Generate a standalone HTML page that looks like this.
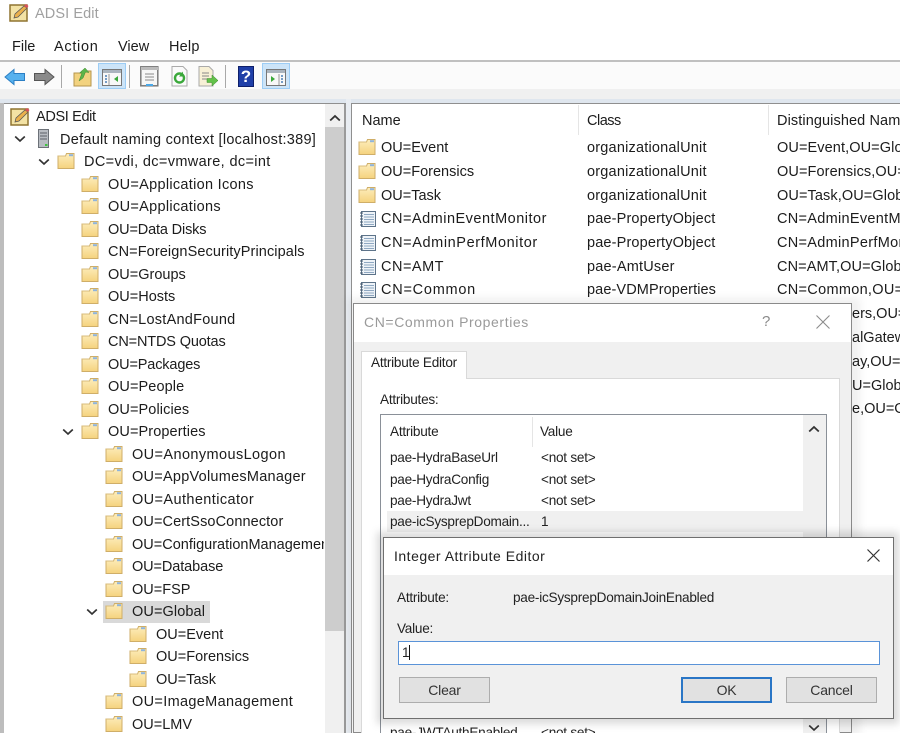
<!DOCTYPE html>
<html><head><meta charset="utf-8"><title>ADSI Edit</title>
<style>
html,body{margin:0;padding:0;background:#fff}
#r{position:relative;width:900px;height:733px;overflow:hidden;background:#fff;font-family:"Liberation Sans",sans-serif;font-size:14.5px;color:#1c1c1c;filter:blur(.35px)}
#r div,#r span,#r svg{position:absolute}
.t{white-space:nowrap;line-height:18px;height:18px}
.d{white-space:nowrap;line-height:16px;height:16px;font-size:13.6px;letter-spacing:-.25px;color:#222}
.b{box-sizing:border-box;background:#e1e1e1;border:1px solid #adadad;text-align:center;font-size:14px;color:#333;line-height:24px;letter-spacing:-.2px}
</style></head><body>
<div id="r">
<svg width="0" height="0" style="position:absolute">
<defs><linearGradient id="g" x1="0" y1="0" x2="0" y2="1"><stop offset="0" stop-color="#fdeebd"/><stop offset="1" stop-color="#f5d27e"/></linearGradient></defs>
<symbol id="f" viewBox="0 0 18 18"><path d="M1 4V16.500H17V1.500H9.500L8.500 4Z" fill="url(#g)" stroke="#cfae68"/><path d="M1 4H8.500" stroke="#d9bd7c"/><path d="M12 2.200h4v2h-4z" fill="#8fb4dc"/></symbol>
<symbol id="n" viewBox="0 0 18 18"><rect x="2.500" y="1.500" width="14" height="15" fill="#eef3f8" stroke="#5d7389"/><path d="M5 4.500H15M5 7H15M5 9.500H15M5 12H15M5 14.500H15" stroke="#8fa8c2"/><path d="M1 3H4M1 6H4M1 9H4M1 12H4M1 15H4" stroke="#40566b"/></symbol>
<symbol id="a" viewBox="0 0 20 20"><path d="M1 2H18V18H1Z" fill="#f3e2a4" stroke="#8f7430" stroke-width="1.500"/><path d="M5 15L6 11L15 3L18 5L9 14Z" fill="#eab04c" stroke="#555" stroke-width=".7"/><path d="M15 3L18 5L19.500 3L17 1Z" fill="#d8505a"/></symbol>
<symbol id="c" viewBox="0 0 12 8"><path d="M1.200 1.500L6 6L10.800 1.500" fill="none" stroke="#333" stroke-width="1.700"/></symbol>
</svg>

<!-- title + menu -->
<svg style="left:9px;top:3px" width="20" height="20"><use href="#a"/></svg>
<div class="t" style="left:35px;top:5px;color:#a0a0a0;letter-spacing:.1px">ADSI Edit</div>
<div class="t" style="left:12px;top:38px">File</div>
<div class="t" style="left:54px;top:38px;letter-spacing:.7px">Action</div>
<div class="t" style="left:118px;top:38px">View</div>
<div class="t" style="left:169px;top:38px;letter-spacing:.2px">Help</div>
<div style="left:0;top:60px;width:900px;height:2px;background:#c0c0c0"></div>

<!-- toolbar -->
<div style="left:0;top:62px;width:900px;height:27px;background:#fbfbfb"></div>
<div style="left:0;top:89px;width:900px;height:10px;background:#f0f0f0"></div>
<div style="left:0;top:99px;width:900px;height:4px;background:#dfe6ee"></div>
<svg style="left:4px;top:67px" width="22" height="20"><path d="M1 10L10 2.500V6.500H20.500V13.500H10V17.500Z" fill="#56b1ee" stroke="#2b7fc4"/></svg>
<svg style="left:33px;top:67px" width="22" height="20"><path d="M21 10L12 2.500V6.500H1.500V13.500H12V17.500Z" fill="#8a8a8a" stroke="#555"/></svg>
<div style="left:61px;top:65px;width:1px;height:23px;background:#a8a8a8"></div>
<svg style="left:73px;top:66px" width="20" height="22"><path d="M1 7H8L9 5H18V20H1Z" fill="#f2d27f" stroke="#b5954e"/><path d="M6 15L9 7L6.500 7L12 2L16 6.500L12.500 6L10 12Z" fill="#5db54a" stroke="#3a8a2e" stroke-width=".5"/></svg>
<div style="left:98px;top:63px;width:28px;height:26px;background:#cce4f8;border:1px solid #9dcdf5;box-sizing:border-box"></div>
<svg style="left:102px;top:69px" width="21" height="18"><rect x=".5" y=".5" width="19" height="16" fill="#f8f8f8" stroke="#777"/><rect x="1" y="1" width="18" height="3" fill="#aab4be"/><path d="M7 5v11" stroke="#999"/><path d="M3 7h2M3 10h2M3 13h2" stroke="#4a7fb5" stroke-width="1.500"/><path d="M16 7v6l-4-3z" fill="#3aa83a"/></svg>
<div style="left:129px;top:65px;width:1px;height:23px;background:#a8a8a8"></div>
<svg style="left:140px;top:66px" width="19" height="21"><rect x=".8" y=".8" width="17" height="19" fill="#f6f6f6" stroke="#7a7a7a" stroke-width="1.500"/><rect x="1" y="1" width="17" height="3" fill="#bbb"/><path d="M5 8h9M5 11h9M5 14h9" stroke="#8a8a8a"/><path d="M6 19h7" stroke="#4aa8e8" stroke-width="2"/></svg>
<svg style="left:171px;top:66px" width="17" height="21"><path d="M1 .5H12L16 4.500V20H1Z" fill="#fafafa" stroke="#aaa"/><circle cx="8.500" cy="12" r="4.500" fill="none" stroke="#3aa83a" stroke-width="2.400"/><path d="M12 5.500v5h-4z" fill="#3aa83a"/></svg>
<svg style="left:198px;top:66px" width="21" height="21"><path d="M1 .5H11L15 4.500V20H1Z" fill="#f7f0d6" stroke="#aaa"/><path d="M4 7h7M4 10h7M4 13h6" stroke="#888"/><path d="M9 12.500h5V9l6 5.500-6 5.500v-3.500H9Z" fill="#63c14a" stroke="#3a8a2e" stroke-width=".5"/></svg>
<div style="left:225px;top:65px;width:1px;height:23px;background:#a8a8a8"></div>
<div style="left:238px;top:66px;width:16px;height:21px;background:#1f3fa8;border:1px solid #0e1f6a;box-sizing:border-box;color:#fff;font-weight:bold;font-size:17px;line-height:20px;text-align:center">?</div>
<div style="left:262px;top:63px;width:28px;height:26px;background:#cce4f8;border:1px solid #9dcdf5;box-sizing:border-box"></div>
<svg style="left:266px;top:69px" width="21" height="18"><rect x=".5" y=".5" width="19" height="16" fill="#f8f8f8" stroke="#777"/><rect x="1" y="1" width="18" height="3" fill="#aab4be"/><path d="M13 5v11" stroke="#999"/><path d="M15 7h2M15 10h2M15 13h2" stroke="#4a7fb5" stroke-width="1.500"/><path d="M5 7v6l4-3z" fill="#3aa83a"/></svg>

<!-- frame -->
<div style="left:0;top:103px;width:4px;height:630px;background:#bdbdbd"></div>
<div style="left:4px;top:103px;width:342px;height:1px;background:#8f8f8f"></div>
<div style="left:4px;top:104px;width:321px;height:629px;background:#fff"></div>
<div style="left:325px;top:104px;width:19px;height:629px;background:#f0f0f0"></div>
<div style="left:325px;top:127px;width:19px;height:504px;background:#cdcdcd"></div>
<svg style="left:329px;top:114px" width="12" height="8"><path d="M1.200 6.500L6 2L10.800 6.500" fill="none" stroke="#333" stroke-width="1.800"/></svg>
<div style="left:344px;top:104px;width:2px;height:629px;background:#9a9a9a"></div>
<div style="left:346px;top:99px;width:5px;height:634px;background:#e9edf2"></div>
<div style="left:351px;top:103px;width:549px;height:1px;background:#8f8f8f"></div>
<div style="left:351px;top:103px;width:1px;height:630px;background:#8f8f8f"></div>

<!-- tree -->
<svg style="left:10px;top:107px" width="20" height="20"><use href="#a"/></svg>
<div class="t" style="left:36px;top:108px;letter-spacing:-.35px">ADSI Edit</div>
<svg style="left:14px;top:135px" width="12" height="8"><use href="#c"/></svg>
<svg style="left:38px;top:129px" width="12" height="19"><rect x=".5" y=".5" width="10" height="18" fill="#b8bcc2" stroke="#6c7178"/><path d="M2 4h7M2 7h7M2 10h7" stroke="#5b6068"/><rect x="7" y="15" width="2.500" height="2" fill="#3fc43f"/></svg>
<div class="t" style="left:60px;top:131px;letter-spacing:.27px">Default naming context [localhost:389]</div>
<svg style="left:38px;top:158px" width="12" height="8"><use href="#c"/></svg>
<svg style="left:57px;top:152px" width="18" height="18"><use href="#f"/></svg>
<div class="t" style="left:84px;top:153px;letter-spacing:.36px">DC=vdi, dc=vmware, dc=int</div>

<svg style="left:81px;top:175px" width="18" height="18"><use href="#f"/></svg><div class="t" style="left:108px;top:176px;letter-spacing:.3px">OU=Application Icons</div>
<svg style="left:81px;top:197px" width="18" height="18"><use href="#f"/></svg><div class="t" style="left:108px;top:198px;letter-spacing:.3px">OU=Applications</div>
<svg style="left:81px;top:220px" width="18" height="18"><use href="#f"/></svg><div class="t" style="left:108px;top:221px;letter-spacing:-.15px">OU=Data Disks</div>
<svg style="left:81px;top:242px" width="18" height="18"><use href="#f"/></svg><div class="t" style="left:108px;top:243px;letter-spacing:.1px">CN=ForeignSecurityPrincipals</div>
<svg style="left:81px;top:265px" width="18" height="18"><use href="#f"/></svg><div class="t" style="left:108px;top:266px">OU=Groups</div>
<svg style="left:81px;top:287px" width="18" height="18"><use href="#f"/></svg><div class="t" style="left:108px;top:288px">OU=Hosts</div>
<svg style="left:81px;top:310px" width="18" height="18"><use href="#f"/></svg><div class="t" style="left:108px;top:311px;letter-spacing:.25px">CN=LostAndFound</div>
<svg style="left:81px;top:332px" width="18" height="18"><use href="#f"/></svg><div class="t" style="left:108px;top:333px;letter-spacing:-.15px">CN=NTDS Quotas</div>
<svg style="left:81px;top:355px" width="18" height="18"><use href="#f"/></svg><div class="t" style="left:108px;top:356px;letter-spacing:-.15px">OU=Packages</div>
<svg style="left:81px;top:377px" width="18" height="18"><use href="#f"/></svg><div class="t" style="left:108px;top:378px;letter-spacing:.1px">OU=People</div>
<svg style="left:81px;top:400px" width="18" height="18"><use href="#f"/></svg><div class="t" style="left:108px;top:401px;letter-spacing:.1px">OU=Policies</div>
<svg style="left:62px;top:428px" width="12" height="8"><use href="#c"/></svg>
<svg style="left:81px;top:422px" width="18" height="18"><use href="#f"/></svg><div class="t" style="left:108px;top:423px;letter-spacing:.1px">OU=Properties</div>

<svg style="left:105px;top:445px" width="18" height="18"><use href="#f"/></svg><div class="t" style="left:132px;top:446px;letter-spacing:.4px">OU=AnonymousLogon</div>
<svg style="left:105px;top:467px" width="18" height="18"><use href="#f"/></svg><div class="t" style="left:132px;top:468px;letter-spacing:.25px">OU=AppVolumesManager</div>
<svg style="left:105px;top:490px" width="18" height="18"><use href="#f"/></svg><div class="t" style="left:132px;top:491px;letter-spacing:.4px">OU=Authenticator</div>
<svg style="left:105px;top:512px" width="18" height="18"><use href="#f"/></svg><div class="t" style="left:132px;top:513px;letter-spacing:.1px">OU=CertSsoConnector</div>
<svg style="left:105px;top:535px" width="18" height="18"><use href="#f"/></svg><div style="left:132px;top:536px;width:192px;height:18px;overflow:hidden"><div class="t" style="left:0;top:0">OU=ConfigurationManagement</div></div>
<svg style="left:105px;top:557px" width="18" height="18"><use href="#f"/></svg><div class="t" style="left:132px;top:558px;letter-spacing:-.1px">OU=Database</div>
<svg style="left:105px;top:580px" width="18" height="18"><use href="#f"/></svg><div class="t" style="left:132px;top:581px">OU=FSP</div>
<div style="left:103px;top:601px;width:107px;height:22px;background:#d9d9d9"></div>
<svg style="left:86px;top:608px" width="12" height="8"><use href="#c"/></svg>
<svg style="left:105px;top:602px" width="18" height="18"><use href="#f"/></svg><div class="t" style="left:132px;top:603px;letter-spacing:.1px">OU=Global</div>
<svg style="left:129px;top:625px" width="18" height="18"><use href="#f"/></svg><div class="t" style="left:156px;top:626px">OU=Event</div>
<svg style="left:129px;top:647px" width="18" height="18"><use href="#f"/></svg><div class="t" style="left:156px;top:648px">OU=Forensics</div>
<svg style="left:129px;top:670px" width="18" height="18"><use href="#f"/></svg><div class="t" style="left:156px;top:671px">OU=Task</div>
<svg style="left:105px;top:692px" width="18" height="18"><use href="#f"/></svg><div class="t" style="left:132px;top:693px;letter-spacing:.33px">OU=ImageManagement</div>
<svg style="left:105px;top:715px" width="18" height="18"><use href="#f"/></svg><div class="t" style="left:132px;top:716px">OU=LMV</div>

<!-- list -->
<div class="t" style="left:362px;top:112px">Name</div>
<div class="t" style="left:587px;top:112px;letter-spacing:-.5px">Class</div>
<div class="t" style="left:777px;top:112px;letter-spacing:.1px">Distinguished Name</div>
<div style="left:578px;top:105px;width:1px;height:30px;background:#e5e5e5"></div>
<div style="left:768px;top:105px;width:1px;height:30px;background:#e5e5e5"></div>

<svg style="left:358px;top:138px" width="18" height="18"><use href="#f"/></svg><div class="t" style="left:381px;top:139px">OU=Event</div><div class="t" style="left:587px;top:139px;letter-spacing:.2px">organizationalUnit</div><div class="t" style="left:777px;top:139px;letter-spacing:.1px">OU=Event,OU=Global,OU=Properties</div>
<svg style="left:358px;top:162px" width="18" height="18"><use href="#f"/></svg><div class="t" style="left:381px;top:163px">OU=Forensics</div><div class="t" style="left:587px;top:163px;letter-spacing:.2px">organizationalUnit</div><div class="t" style="left:777px;top:163px;letter-spacing:.1px">OU=Forensics,OU=Global</div>
<svg style="left:358px;top:186px" width="18" height="18"><use href="#f"/></svg><div class="t" style="left:381px;top:187px">OU=Task</div><div class="t" style="left:587px;top:187px;letter-spacing:.2px">organizationalUnit</div><div class="t" style="left:777px;top:187px;letter-spacing:.1px">OU=Task,OU=Global,OU=Prop</div>
<svg style="left:359px;top:210px" width="18" height="18"><use href="#n"/></svg><div class="t" style="left:381px;top:210px;letter-spacing:.5px">CN=AdminEventMonitor</div><div class="t" style="left:587px;top:210px;letter-spacing:.15px">pae-PropertyObject</div><div class="t" style="left:777px;top:210px;letter-spacing:.3px">CN=AdminEventMonitor,OU</div>
<svg style="left:359px;top:234px" width="18" height="18"><use href="#n"/></svg><div class="t" style="left:381px;top:234px;letter-spacing:.6px">CN=AdminPerfMonitor</div><div class="t" style="left:587px;top:234px;letter-spacing:.15px">pae-PropertyObject</div><div class="t" style="left:777px;top:234px;letter-spacing:.3px">CN=AdminPerfMonitor,OU</div>
<svg style="left:359px;top:258px" width="18" height="18"><use href="#n"/></svg><div class="t" style="left:381px;top:258px;letter-spacing:.5px">CN=AMT</div><div class="t" style="left:587px;top:258px;letter-spacing:.2px">pae-AmtUser</div><div class="t" style="left:777px;top:258px;letter-spacing:.1px">CN=AMT,OU=Global,OU=Prop</div>
<svg style="left:359px;top:281px" width="18" height="18"><use href="#n"/></svg><div class="t" style="left:381px;top:281px;letter-spacing:.75px">CN=Common</div><div class="t" style="left:587px;top:281px;letter-spacing:.1px">pae-VDMProperties</div><div class="t" style="left:777px;top:281px;letter-spacing:.3px">CN=Common,OU=Global,OU</div>
<div class="t" style="left:852px;top:305px">ers,OU=Global</div>
<div class="t" style="left:852px;top:329px">alGateway</div>
<div class="t" style="left:852px;top:353px">ay,OU=Global</div>
<div class="t" style="left:852px;top:377px">U=Global</div>
<div class="t" style="left:852px;top:400px">e,OU=Global</div>

<!-- dialog 1 -->
<div style="left:348px;top:298px;width:512px;height:440px;background:rgba(0,0,0,.06);filter:blur(4px)"></div>
<div style="left:353px;top:303px;width:499px;height:430px;background:#f0f0f0;border:1px solid #8a8a8a;box-sizing:border-box"></div>
<div style="left:354px;top:304px;width:497px;height:38px;background:#fff"></div>
<div class="t" style="left:364px;top:313px;color:#9a9a9a;font-size:14px;letter-spacing:.6px">CN=Common Properties</div>
<div class="t" style="left:762px;top:313px;color:#8a8a8a;font-size:15px">?</div>
<svg style="left:815px;top:314px" width="16" height="16"><path d="M1.500 1.500L14.500 14.500M14.500 1.500L1.500 14.500" stroke="#8c8c8c" stroke-width="1.100"/></svg>
<div style="left:361px;top:378px;width:479px;height:360px;background:#fff;border:1px solid #d9d9d9;box-sizing:border-box"></div>
<div style="left:361px;top:351px;width:106px;height:28px;background:#fff;border:1px solid #d9d9d9;border-bottom:0;box-sizing:border-box"></div>
<div class="d" style="left:371px;top:355px">Attribute Editor</div>
<div class="d" style="left:380px;top:392px">Attributes:</div>
<div style="left:380px;top:414px;width:447px;height:330px;background:#fff;border:1px solid #8a9098;box-sizing:border-box"></div>
<div style="left:803px;top:415px;width:23px;height:318px;background:#f0f0f0"></div>
<svg style="left:808px;top:425px" width="12" height="8"><path d="M1.200 6.500L6 2L10.800 6.500" fill="none" stroke="#333" stroke-width="1.800"/></svg>
<svg style="left:808px;top:724px" width="12" height="8"><use href="#c"/></svg>
<div class="d" style="left:390px;top:424px">Attribute</div>
<div class="d" style="left:540px;top:424px">Value</div>
<div style="left:532px;top:417px;width:1px;height:30px;background:#e5e5e5"></div>
<div style="left:387px;top:511px;width:416px;height:21px;background:#f0f0f0"></div>
<div class="d" style="left:390px;top:450px">pae-HydraBaseUrl</div><div class="d" style="left:541px;top:450px">&lt;not set&gt;</div>
<div class="d" style="left:390px;top:472px">pae-HydraConfig</div><div class="d" style="left:541px;top:472px">&lt;not set&gt;</div>
<div class="d" style="left:390px;top:493px">pae-HydraJwt</div><div class="d" style="left:541px;top:493px">&lt;not set&gt;</div>
<div class="d" style="left:390px;top:514px">pae-icSysprepDomain...</div><div class="d" style="left:541px;top:514px">1</div>
<div class="d" style="left:390px;top:725px">pae-JWTAuthEnabled</div><div class="d" style="left:541px;top:725px">&lt;not set&gt;</div>

<!-- dialog 2 -->
<div style="left:377px;top:532px;width:522px;height:192px;background:rgba(0,0,0,.14);filter:blur(4px)"></div>
<div style="left:383px;top:537px;width:511px;height:182px;background:#f0f0f0;border:1px solid #6f6f6f;box-sizing:border-box"></div>
<div style="left:384px;top:538px;width:509px;height:37px;background:#fff"></div>
<div class="t" style="left:394px;top:547px;font-size:14px;color:#222;letter-spacing:.5px">Integer Attribute Editor</div>
<svg style="left:866px;top:548px" width="15" height="15"><path d="M1.500 1.500L13.500 13.500M13.500 1.500L1.500 13.500" stroke="#333" stroke-width="1.200"/></svg>
<div class="d" style="left:397px;top:590px">Attribute:</div>
<div class="d" style="left:513px;top:590px">pae-icSysprepDomainJoinEnabled</div>
<div class="d" style="left:397px;top:621px">Value:</div>
<div style="left:398px;top:641px;width:482px;height:24px;background:#fff;border:1px solid #5a93d8;box-sizing:border-box"></div>
<div class="d" style="left:402px;top:645px">1</div>
<div style="left:409px;top:645px;width:1px;height:15px;background:#111"></div>
<div class="b" style="left:399px;top:677px;width:91px;height:26px">Clear</div>
<div class="b" style="left:681px;top:677px;width:91px;height:26px;border:2px solid #2a76c6;line-height:22px">OK</div>
<div class="b" style="left:786px;top:677px;width:91px;height:26px">Cancel</div>
</div>
</body></html>
